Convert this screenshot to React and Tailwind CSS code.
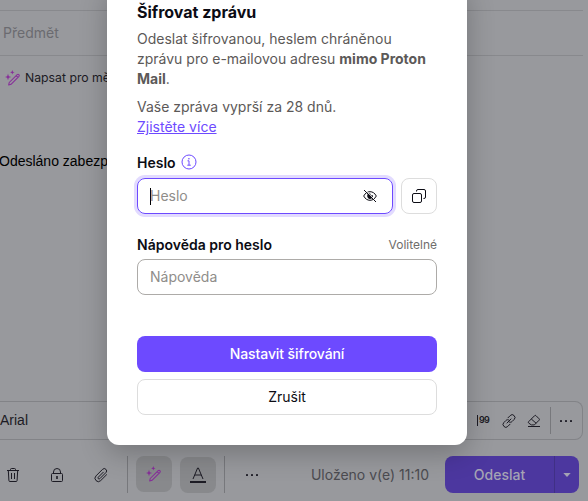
import React from "react";

const MagicPen = ({ className }) => (
  <svg className={className} viewBox="0 0 16 16" fill="none" stroke="currentColor" strokeLinejoin="round">
    <path d="m12.2 4.6-8 7.9-.5 2.4 2.3-.6 8-8a1.25 1.25 0 0 0-1.8-1.7ZM11.1 5.7l1.9 1.8" strokeWidth="1.05" />
    <path d="M3 3.7 3.8 6.2 6.2 7 3.8 7.8 3 10.3 2.2 7.8-.2 7 2.2 6.2ZM7.3.1l.6 1.6 1.6.6-1.6.6-.6 1.6-.6-1.6-1.6-.6 1.6-.6Z" fill="currentColor" stroke="none" />
  </svg>
);

const Trash = () => (
  <svg className="size-4" viewBox="0 0 16 16" fill="none" stroke="currentColor">
    <path d="M2 3.5h12M5.5 3.5v-1a1 1 0 0 1 1-1h3a1 1 0 0 1 1 1v1M3.3 3.5l.6 10a1 1 0 0 0 1 1h6.2a1 1 0 0 0 1-1l.6-10M6.5 6v6M9.5 6v6" />
  </svg>
);

const Lock = () => (
  <svg className="size-4" viewBox="0 0 16 16" fill="none" stroke="currentColor">
    <rect x="2.5" y="6.5" width="11" height="8" rx="1" />
    <path d="M4.5 6.5V5a3.5 3.5 0 0 1 7 0v1.5" />
    <path d="M8 9v3" strokeWidth="1.6" />
  </svg>
);

const Clip = () => (
  <svg className="size-4" viewBox="0 0 16 16" fill="none" stroke="currentColor" strokeLinecap="round">
    <path d="m10.3 5.2-5 5a1 1 0 0 0 1.5 1.5l6.1-6.1a2.3 2.3 0 0 0-3.3-3.3L3 8.9a3.3 3.3 0 0 0 4.7 4.7l5.9-5.9" />
  </svg>
);

const Dots = ({ className }) => (
  <svg className={className} viewBox="0 0 14 4" fill="currentColor">
    <rect x="1" y="1" width="2" height="2" rx=".4" />
    <rect x="6" y="1" width="2" height="2" rx=".4" />
    <rect x="11" y="1" width="2" height="2" rx=".4" />
  </svg>
);

const Link = () => (
  <svg className="size-[14px]" viewBox="0 0 14 14" fill="none" stroke="currentColor" strokeLinecap="round">
    <path d="m5 9 4-4M6 3.8l2.2-2.2a2.6 2.6 0 0 1 3.9 0 2.7 2.7 0 0 1 0 3.9l-2 2c-.9.9-2 1-3 .5M8 10.2l-2.2 2.2a2.6 2.6 0 0 1-3.9 0 2.7 2.7 0 0 1 0-3.9l2-2c.9-.9 2-1 3-.5" />
  </svg>
);

const Eraser = () => (
  <svg className="size-[14px]" viewBox="0 0 14 14" fill="none" stroke="currentColor" strokeLinejoin="round">
    <path d="M1.6 7.7 7.6 1.7a1 1 0 0 1 1.4 0l3.1 3.1a1 1 0 0 1 0 1.4l-4.7 4.7H4.3L1.6 9a1 1 0 0 1 0-1.3ZM4.3 5l4.9 4.3M1 12.5h12" />
  </svg>
);

const EyeSlash = () => (
  <svg className="size-[14px] text-[#0c0c14]" viewBox="0 0 14 14" fill="none" stroke="currentColor">
    <path d="M.7 7C2.2 4.1 4.4 2.7 7 2.7S11.8 4.1 13.3 7C11.8 9.9 9.6 11.3 7 11.3S2.2 9.9.7 7Z" />
    <path d="M7 4.2a2.8 2.8 0 1 0 2.6 1.7L8.2 6.4 7 4.2Z" fill="currentColor" stroke="none" />
    <path d="m2 .5 11.3 12" stroke="#fff" strokeWidth=".9" />
    <path d="m1 1 12 12" strokeWidth="1" />
  </svg>
);

const Copy = () => (
  <svg className="size-4 text-[#0c0c14]" viewBox="0 0 16 16" fill="none" stroke="currentColor">
    <rect x="1.5" y="5.5" width="9" height="9" rx="1.5" />
    <path d="M5.5 3.5V3A1.5 1.5 0 0 1 7 1.5h6A1.5 1.5 0 0 1 14.5 3v6a1.5 1.5 0 0 1-1.5 1.5h-.5" />
  </svg>
);

const Info = () => (
  <svg className="size-4 text-[#6d4aff]" viewBox="0 0 16 16" fill="none" stroke="currentColor">
    <circle cx="8" cy="8" r="7" />
    <path d="M6.5 6.8H8v4.3M6.3 11.2h3.5" />
    <circle cx="7.9" cy="4.7" r=".8" fill="currentColor" stroke="none" />
  </svg>
);

function Composer() {
  return (
    <div className="flex h-[501px] flex-col text-[#1c1b24]">
      <div className="mr-[5px] h-[11px] shrink-0 border-b border-[#88898d]" />
      <div className="mr-[5px] flex h-[45px] shrink-0 items-center border-b border-[#88898d] pb-px pl-[3px] text-[14px] text-[#6b6b70]">
        Předmět
      </div>
      <div className="flex h-[44px] w-[107px] shrink-0 items-center gap-1 overflow-hidden pl-[5px] text-[12.25px] whitespace-nowrap">
        <MagicPen className="size-4 shrink-0 text-[#872b9a]" />
        Napsat pro mě
      </div>
      <div className="-ml-px w-[108px] flex-1 overflow-hidden pt-[51px] font-['Liberation_Sans',Arial,sans-serif] text-[14px] leading-5 whitespace-nowrap text-black">
        Odesláno zabezp
      </div>
      <div className="mr-[5px] flex h-[39px] shrink-0 items-center rounded-r-lg border border-l-0 border-[#828387]">
        <span className="font-['Liberation_Sans',Arial,sans-serif] text-[14px]">Arial</span>
        <div className="ml-auto flex items-center">
          <span className="mr-[13px] flex h-[11px] items-center border-l border-current pb-px pl-px text-[9px] font-semibold tracking-[-0.08em]">99</span>
          <Link />
          <span className="w-[11px]" />
          <Eraser />
          <span className="ml-[9px] h-[27px] w-px bg-[#77787c]" />
          <Dots className="mr-[9px] ml-[8px] h-[4px] w-[14px]" />
        </div>
      </div>
      <div className="mt-4 mb-2 flex h-[37px] shrink-0 items-center pr-[9px] pl-[5px]">
        <Trash />
        <span className="w-7" />
        <Lock />
        <span className="w-7" />
        <Clip />
        <span className="ml-[18px] h-[37px] w-px bg-[#77787c]" />
        <div className="mb-px ml-2 flex size-9 items-center justify-center rounded-lg bg-[#88898c]">
          <MagicPen className="size-4 text-[#872b9a]" />
        </div>
        <div className="ml-2 flex size-9 flex-col items-center justify-center rounded-lg bg-[#88898c]">
          <svg className="h-[18px] w-4" viewBox="0 0 16 18" fill="none" stroke="currentColor">
            <path d="m3 13 4.6-11h.8L13 13M4.8 9h6.4" />
            <path d="M0 16h16" strokeWidth="2" />
          </svg>
        </div>
        <span className="ml-2 h-[37px] w-px bg-[#77787c]" />
        <Dots className="ml-5 h-[4px] w-[14px]" />
        <span className="ml-auto text-[14px] text-[#4b4b50]">Uloženo v(e) 11:10</span>
        <div className="ml-4 flex h-[37px] w-[134px] items-center overflow-hidden rounded-lg bg-[#4c379f] text-[#a5a3b4]">
          <span className="flex h-full w-[110px] items-center justify-center border-r border-[#403085] text-[14px] font-medium">Odeslat</span>
          <svg className="ml-[8px] h-[4px] w-[8px]" viewBox="0 0 8 4" fill="currentColor"><path d="M.3 0h7.4L4 4Z" /></svg>
        </div>
      </div>
    </div>
  );
}

function EncryptDialog() {
  return (
    <div className="absolute -top-4 left-[107px] h-[461px] w-[360px] rounded-xl bg-white px-[30px] pt-4 shadow-[0_8px_28px_rgba(0,0,0,0.24)]">
      <h1 className="h-[29px] text-[16px] leading-6 font-bold text-[#0c0c14]">Šifrovat zprávu</h1>
      <p className="text-[14px] leading-5 text-[#5c5958]">
        Odeslat šifrovanou, heslem chráněnou<br />
        zprávu pro e-mailovou adresu <b>mimo Proton<br />Mail</b>.
      </p>
      <p className="mt-2 text-[14px] leading-5 text-[#5c5958]">
        Vaše zpráva vyprší za 28 dnů.<br />
        <a className="text-[#6d4aff] underline">Zjistěte více</a>
      </p>
      <div className="mt-[15px] flex h-5 items-center gap-[5px] text-[14px] font-semibold text-[#0c0c14]">
        Heslo <Info />
      </div>
      <div className="mt-[6px] flex gap-2">
        <div className="flex h-9 w-64 items-center rounded-lg border border-[#6d4aff] pr-[15px] pl-[12px] text-[14px] text-[#8f8d8a] shadow-[0_0_0_3px_#e2dbff]">
          <span className="-mr-px h-[17px] w-px bg-black" />
          <span className="pb-0.5">Heslo</span>
          <span className="ml-auto"><EyeSlash /></span>
        </div>
        <div className="flex size-9 items-center justify-center rounded-lg border border-[#dddddd]"><Copy /></div>
      </div>
      <div className="mt-[20px] flex h-5 items-center justify-between">
        <span className="text-[14px] font-semibold text-[#0c0c14]">Nápověda pro heslo</span>
        <span className="pt-0.5 text-[12px] text-[#706d6b]">Volitelné</span>
      </div>
      <div className="mt-[5px] flex h-9 items-center rounded-lg border border-[#adaba8] pb-0.5 pl-[12px] text-[14px] text-[#8f8d8a]">Nápověda</div>
      <div className="mt-[41px] flex h-9 items-center justify-center rounded-lg bg-[#6d4aff] pb-0.5 text-[14px] font-medium tracking-[-0.007em] text-white">Nastavit šifrování</div>
      <div className="mt-[7px] flex h-9 items-center justify-center rounded-lg border border-[#dddddd] pb-0.5 text-[14px] text-[#0c0c14]">Zrušit</div>
    </div>
  );
}

export default function App() {
  return (
    <div className="relative h-[501px] w-[588px] overflow-hidden bg-[#98999d] font-[Inter,sans-serif]">
      <Composer />
      <EncryptDialog />
    </div>
  );
}
